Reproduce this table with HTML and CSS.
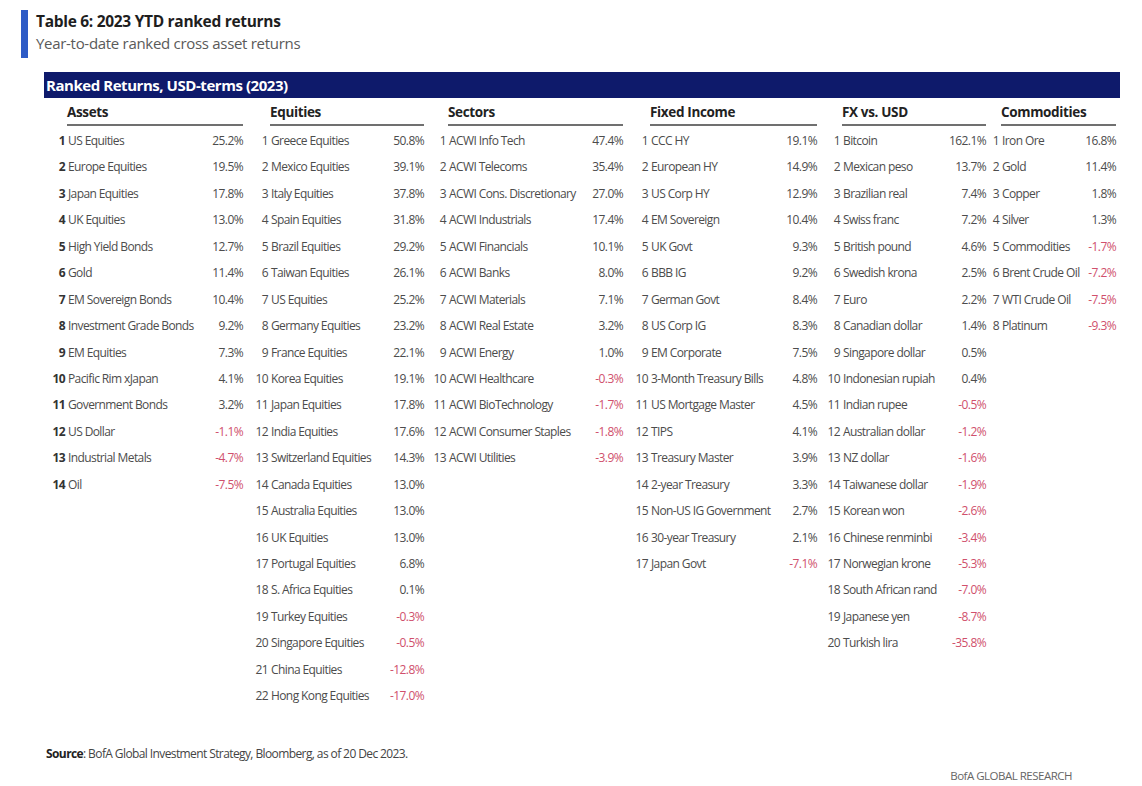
FILE: index.html
```html
<!DOCTYPE html>
<html>
<head>
<meta charset="utf-8">
<link rel="stylesheet" href="styles.css">
</head>
<body>
<div class="page">
  <div class="titleblock">
    <div class="title">Table 6: 2023 YTD ranked returns</div>
    <div class="subtitle">Year-to-date ranked cross asset returns</div>
  </div>
  <div class="table">
    <div class="bar">Ranked Returns, USD-terms (2023)</div>
    <div class="grid">
      <div class="col c-assets">
        <div class="hd">Assets</div>
        <div class="row"><span class="rk b">1</span><span class="nm">US Equities</span><span class="v">25.2%</span></div>
        <div class="row"><span class="rk b">2</span><span class="nm">Europe Equities</span><span class="v">19.5%</span></div>
        <div class="row"><span class="rk b">3</span><span class="nm">Japan Equities</span><span class="v">17.8%</span></div>
        <div class="row"><span class="rk b">4</span><span class="nm">UK Equities</span><span class="v">13.0%</span></div>
        <div class="row"><span class="rk b">5</span><span class="nm">High Yield Bonds</span><span class="v">12.7%</span></div>
        <div class="row"><span class="rk b">6</span><span class="nm">Gold</span><span class="v">11.4%</span></div>
        <div class="row"><span class="rk b">7</span><span class="nm">EM Sovereign Bonds</span><span class="v">10.4%</span></div>
        <div class="row"><span class="rk b">8</span><span class="nm">Investment Grade Bonds</span><span class="v">9.2%</span></div>
        <div class="row"><span class="rk b">9</span><span class="nm">EM Equities</span><span class="v">7.3%</span></div>
        <div class="row"><span class="rk b">10</span><span class="nm">Pacific Rim xJapan</span><span class="v">4.1%</span></div>
        <div class="row"><span class="rk b">11</span><span class="nm">Government Bonds</span><span class="v">3.2%</span></div>
        <div class="row"><span class="rk b">12</span><span class="nm">US Dollar</span><span class="v neg">-1.1%</span></div>
        <div class="row"><span class="rk b">13</span><span class="nm">Industrial Metals</span><span class="v neg">-4.7%</span></div>
        <div class="row"><span class="rk b">14</span><span class="nm">Oil</span><span class="v neg">-7.5%</span></div>
      </div>
      <div class="col c-eq">
        <div class="hd">Equities</div>
        <div class="row"><span class="rk">1</span><span class="nm">Greece Equities</span><span class="v">50.8%</span></div>
        <div class="row"><span class="rk">2</span><span class="nm">Mexico Equities</span><span class="v">39.1%</span></div>
        <div class="row"><span class="rk">3</span><span class="nm">Italy Equities</span><span class="v">37.8%</span></div>
        <div class="row"><span class="rk">4</span><span class="nm">Spain Equities</span><span class="v">31.8%</span></div>
        <div class="row"><span class="rk">5</span><span class="nm">Brazil Equities</span><span class="v">29.2%</span></div>
        <div class="row"><span class="rk">6</span><span class="nm">Taiwan Equities</span><span class="v">26.1%</span></div>
        <div class="row"><span class="rk">7</span><span class="nm">US Equities</span><span class="v">25.2%</span></div>
        <div class="row"><span class="rk">8</span><span class="nm">Germany Equities</span><span class="v">23.2%</span></div>
        <div class="row"><span class="rk">9</span><span class="nm">France Equities</span><span class="v">22.1%</span></div>
        <div class="row"><span class="rk">10</span><span class="nm">Korea Equities</span><span class="v">19.1%</span></div>
        <div class="row"><span class="rk">11</span><span class="nm">Japan Equities</span><span class="v">17.8%</span></div>
        <div class="row"><span class="rk">12</span><span class="nm">India Equities</span><span class="v">17.6%</span></div>
        <div class="row"><span class="rk">13</span><span class="nm">Switzerland Equities</span><span class="v">14.3%</span></div>
        <div class="row"><span class="rk">14</span><span class="nm">Canada Equities</span><span class="v">13.0%</span></div>
        <div class="row"><span class="rk">15</span><span class="nm">Australia Equities</span><span class="v">13.0%</span></div>
        <div class="row"><span class="rk">16</span><span class="nm">UK Equities</span><span class="v">13.0%</span></div>
        <div class="row"><span class="rk">17</span><span class="nm">Portugal Equities</span><span class="v">6.8%</span></div>
        <div class="row"><span class="rk">18</span><span class="nm">S. Africa Equities</span><span class="v">0.1%</span></div>
        <div class="row"><span class="rk">19</span><span class="nm">Turkey Equities</span><span class="v neg">-0.3%</span></div>
        <div class="row"><span class="rk">20</span><span class="nm">Singapore Equities</span><span class="v neg">-0.5%</span></div>
        <div class="row"><span class="rk">21</span><span class="nm">China Equities</span><span class="v neg">-12.8%</span></div>
        <div class="row"><span class="rk">22</span><span class="nm">Hong Kong Equities</span><span class="v neg">-17.0%</span></div>
      </div>
      <div class="col c-sec">
        <div class="hd">Sectors</div>
        <div class="row"><span class="rk">1</span><span class="nm">ACWI Info Tech</span><span class="v">47.4%</span></div>
        <div class="row"><span class="rk">2</span><span class="nm">ACWI Telecoms</span><span class="v">35.4%</span></div>
        <div class="row"><span class="rk">3</span><span class="nm">ACWI Cons. Discretionary</span><span class="v">27.0%</span></div>
        <div class="row"><span class="rk">4</span><span class="nm">ACWI Industrials</span><span class="v">17.4%</span></div>
        <div class="row"><span class="rk">5</span><span class="nm">ACWI Financials</span><span class="v">10.1%</span></div>
        <div class="row"><span class="rk">6</span><span class="nm">ACWI Banks</span><span class="v">8.0%</span></div>
        <div class="row"><span class="rk">7</span><span class="nm">ACWI Materials</span><span class="v">7.1%</span></div>
        <div class="row"><span class="rk">8</span><span class="nm">ACWI Real Estate</span><span class="v">3.2%</span></div>
        <div class="row"><span class="rk">9</span><span class="nm">ACWI Energy</span><span class="v">1.0%</span></div>
        <div class="row"><span class="rk">10</span><span class="nm">ACWI Healthcare</span><span class="v neg">-0.3%</span></div>
        <div class="row"><span class="rk">11</span><span class="nm">ACWI BioTechnology</span><span class="v neg">-1.7%</span></div>
        <div class="row"><span class="rk">12</span><span class="nm">ACWI Consumer Staples</span><span class="v neg">-1.8%</span></div>
        <div class="row"><span class="rk">13</span><span class="nm">ACWI Utilities</span><span class="v neg">-3.9%</span></div>
      </div>
      <div class="col c-fi">
        <div class="hd">Fixed Income</div>
        <div class="row"><span class="rk">1</span><span class="nm">CCC HY</span><span class="v">19.1%</span></div>
        <div class="row"><span class="rk">2</span><span class="nm">European HY</span><span class="v">14.9%</span></div>
        <div class="row"><span class="rk">3</span><span class="nm">US Corp HY</span><span class="v">12.9%</span></div>
        <div class="row"><span class="rk">4</span><span class="nm">EM Sovereign</span><span class="v">10.4%</span></div>
        <div class="row"><span class="rk">5</span><span class="nm">UK Govt</span><span class="v">9.3%</span></div>
        <div class="row"><span class="rk">6</span><span class="nm">BBB IG</span><span class="v">9.2%</span></div>
        <div class="row"><span class="rk">7</span><span class="nm">German Govt</span><span class="v">8.4%</span></div>
        <div class="row"><span class="rk">8</span><span class="nm">US Corp IG</span><span class="v">8.3%</span></div>
        <div class="row"><span class="rk">9</span><span class="nm">EM Corporate</span><span class="v">7.5%</span></div>
        <div class="row"><span class="rk">10</span><span class="nm">3-Month Treasury Bills</span><span class="v">4.8%</span></div>
        <div class="row"><span class="rk">11</span><span class="nm">US Mortgage Master</span><span class="v">4.5%</span></div>
        <div class="row"><span class="rk">12</span><span class="nm">TIPS</span><span class="v">4.1%</span></div>
        <div class="row"><span class="rk">13</span><span class="nm">Treasury Master</span><span class="v">3.9%</span></div>
        <div class="row"><span class="rk">14</span><span class="nm">2-year Treasury</span><span class="v">3.3%</span></div>
        <div class="row"><span class="rk">15</span><span class="nm">Non-US IG Government</span><span class="v">2.7%</span></div>
        <div class="row"><span class="rk">16</span><span class="nm">30-year Treasury</span><span class="v">2.1%</span></div>
        <div class="row"><span class="rk">17</span><span class="nm">Japan Govt</span><span class="v neg">-7.1%</span></div>
      </div>
      <div class="col c-fx">
        <div class="hd">FX vs. USD</div>
        <div class="row"><span class="rk">1</span><span class="nm">Bitcoin</span><span class="v">162.1%</span></div>
        <div class="row"><span class="rk">2</span><span class="nm">Mexican peso</span><span class="v">13.7%</span></div>
        <div class="row"><span class="rk">3</span><span class="nm">Brazilian real</span><span class="v">7.4%</span></div>
        <div class="row"><span class="rk">4</span><span class="nm">Swiss franc</span><span class="v">7.2%</span></div>
        <div class="row"><span class="rk">5</span><span class="nm">British pound</span><span class="v">4.6%</span></div>
        <div class="row"><span class="rk">6</span><span class="nm">Swedish krona</span><span class="v">2.5%</span></div>
        <div class="row"><span class="rk">7</span><span class="nm">Euro</span><span class="v">2.2%</span></div>
        <div class="row"><span class="rk">8</span><span class="nm">Canadian dollar</span><span class="v">1.4%</span></div>
        <div class="row"><span class="rk">9</span><span class="nm">Singapore dollar</span><span class="v">0.5%</span></div>
        <div class="row"><span class="rk">10</span><span class="nm">Indonesian rupiah</span><span class="v">0.4%</span></div>
        <div class="row"><span class="rk">11</span><span class="nm">Indian rupee</span><span class="v neg">-0.5%</span></div>
        <div class="row"><span class="rk">12</span><span class="nm">Australian dollar</span><span class="v neg">-1.2%</span></div>
        <div class="row"><span class="rk">13</span><span class="nm">NZ dollar</span><span class="v neg">-1.6%</span></div>
        <div class="row"><span class="rk">14</span><span class="nm">Taiwanese dollar</span><span class="v neg">-1.9%</span></div>
        <div class="row"><span class="rk">15</span><span class="nm">Korean won</span><span class="v neg">-2.6%</span></div>
        <div class="row"><span class="rk">16</span><span class="nm">Chinese renminbi</span><span class="v neg">-3.4%</span></div>
        <div class="row"><span class="rk">17</span><span class="nm">Norwegian krone</span><span class="v neg">-5.3%</span></div>
        <div class="row"><span class="rk">18</span><span class="nm">South African rand</span><span class="v neg">-7.0%</span></div>
        <div class="row"><span class="rk">19</span><span class="nm">Japanese yen</span><span class="v neg">-8.7%</span></div>
        <div class="row"><span class="rk">20</span><span class="nm">Turkish lira</span><span class="v neg">-35.8%</span></div>
      </div>
      <div class="col c-com">
        <div class="hd">Commodities</div>
        <div class="row"><span class="rk">1</span><span class="nm">Iron Ore</span><span class="v">16.8%</span></div>
        <div class="row"><span class="rk">2</span><span class="nm">Gold</span><span class="v">11.4%</span></div>
        <div class="row"><span class="rk">3</span><span class="nm">Copper</span><span class="v">1.8%</span></div>
        <div class="row"><span class="rk">4</span><span class="nm">Silver</span><span class="v">1.3%</span></div>
        <div class="row"><span class="rk">5</span><span class="nm">Commodities</span><span class="v neg">-1.7%</span></div>
        <div class="row"><span class="rk">6</span><span class="nm">Brent Crude Oil</span><span class="v neg">-7.2%</span></div>
        <div class="row"><span class="rk">7</span><span class="nm">WTI Crude Oil</span><span class="v neg">-7.5%</span></div>
        <div class="row"><span class="rk">8</span><span class="nm">Platinum</span><span class="v neg">-9.3%</span></div>
      </div>
    </div>
  </div>
  <div class="source"><b>Source</b>: BofA Global Investment Strategy, Bloomberg, as of 20 Dec 2023.</div>
  <div class="brand">BofA GLOBAL RESEARCH</div>
</div>
</body>
</html>
```

FILE: styles.css
```css
html, body {
  margin: 0;
  padding: 0;
  background: #ffffff;
}
.page {
  width: 1142px;
  height: 786px;
  font-family: "Open Sans", "Liberation Sans", sans-serif;
  color: #4c4c4c;
  padding-top: 10px;
  box-sizing: border-box;
  position: relative;
}
.titleblock {
  margin-left: 21px;
  border-left: 7px solid #2d5bc6;
  padding-left: 8px;
  height: 48px;
  box-sizing: border-box;
}
.title {
  font-weight: 700;
  font-size: 15.5px;
  letter-spacing: -0.3px;
  line-height: 22px;
  color: #1e1e1e;
}
.subtitle {
  font-size: 15px;
  letter-spacing: -0.3px;
  line-height: 22px;
  color: #5a5a5a;
}
.table {
  margin-left: 44px;
  width: 1076px;
  margin-top: 14px;
}
.bar {
  height: 26px;
  background: #0e1a6b;
  color: #ffffff;
  font-weight: 700;
  font-size: 15px;
  letter-spacing: -0.45px;
  line-height: 26px;
  padding-left: 2px;
}
.grid {
  display: grid;
  grid-template-columns: 203px 178px 202px 192px 159px 132px;
  margin-left: 8px;
  align-items: start;
}
.col {
  display: grid;
  grid-template-columns: 13px 1fr auto;
  column-gap: 3px;
}
.c-assets { padding-right: 12px; }
.c-eq { padding-right: 9px; }
.c-sec { padding-right: 12px; }
.c-fi { padding-right: 10px; }
.c-fx { padding-right: 0; }
.c-com { padding-right: 2px; }
.hd {
  grid-column: 2 / 4;
  margin-left: -1px;
  font-weight: 700;
  font-size: 13.5px;
  letter-spacing: -0.35px;
  color: #222222;
  line-height: 24px;
  padding-top: 2px;
  border-bottom: 2px solid #707070;
  margin-bottom: 2px;
}
.row {
  display: contents;
}
.row > span {
  font-size: 12px;
  letter-spacing: -0.6px;
  line-height: 26.43px;
  white-space: nowrap;
}
.rk {
  text-align: right;
}
.rk.b {
  font-weight: 700;
  color: #333333;
}
.v {
  text-align: right;
}
.neg {
  color: #d0506c;
}
.source {
  position: absolute;
  left: 46px;
  top: 745px;
  font-size: 12px;
  letter-spacing: -0.6px;
  color: #444444;
}
.source b {
  color: #222222;
}
.brand {
  position: absolute;
  right: 70px;
  top: 768px;
  font-size: 11.5px;
  letter-spacing: -0.5px;
  color: #666666;
}
```
